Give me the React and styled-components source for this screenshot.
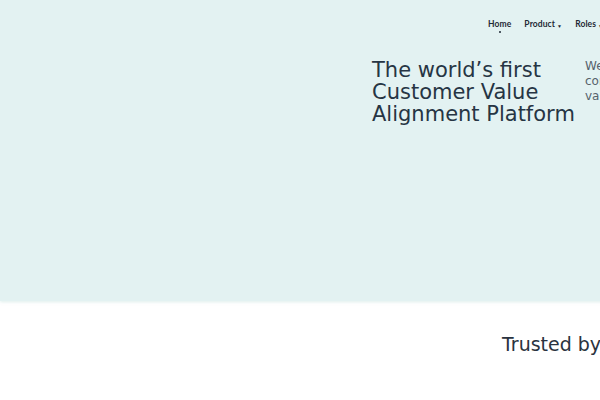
import React from 'react';
import styled, { createGlobalStyle } from 'styled-components';

const GlobalStyle = createGlobalStyle`
  html, body {
    margin: 0;
    padding: 0;
    overflow: hidden;
    background: #ffffff;
    font-family: 'DejaVu Sans', sans-serif;
  }
`;

// 전체 페이지는 화면보다 넓게 잡혀있음
const Page = styled.div`
  width: 1200px;
`;

const Hero = styled.section`
  height: 301px;
  background: #e3f2f2;
  box-shadow: 0 1px 3px rgba(160, 210, 200, 0.35);
`;

const Header = styled.header`
  display: flex;
  align-items: center;
  height: 48px;
  padding-left: 488px;
`;

const Nav = styled.nav`
  display: flex;
  gap: 13px;
`;

const NavItem = styled.a`
  position: relative;
  display: flex;
  align-items: center;
  gap: 2px;
  font-family: 'Lato', sans-serif;
  font-size: 8.5px;
  font-weight: bold;
  letter-spacing: 0.1px;
  color: #1f2a36;
  text-decoration: none;

  ${({ $active }) => $active && `
    &::after {
      content: '';
      position: absolute;
      left: 50%;
      bottom: -4px;
      width: 2px;
      height: 2px;
      margin-left: -1px;
      border-radius: 50%;
      background: #1f2a36;
    }
  `}
`;

const Caret = styled.span`
  font-size: 5px;
  margin-top: 3px;
`;

const HeroBody = styled.div`
  display: flex;
  padding-left: 372px;
  padding-top: 11px;
  gap: 10px;
`;

const Title = styled.h1`
  margin: 0;
  width: 203px;
  font-size: 21px;
  font-weight: normal;
  line-height: 22px;
  color: #263544;
`;

const Lead = styled.p`
  margin: 0;
  width: 185px;
  font-size: 12px;
  line-height: 15px;
  color: #56626c;
`;

const Trusted = styled.section`
  padding: 32px 0 0 502px;
`;

const TrustedTitle = styled.h2`
  margin: 0;
  font-size: 19px;
  font-weight: normal;
  color: #2a3340;
`;

function App() {
  return (
    <>
      <GlobalStyle />
      <Page>
        <Hero>
          <Header>
            <Nav>
              <NavItem $active>Home</NavItem>
              <NavItem>Product<Caret>▼</Caret></NavItem>
              <NavItem>Roles<Caret>▼</Caret></NavItem>
              <NavItem>Resources<Caret>▼</Caret></NavItem>
            </Nav>
          </Header>
          <HeroBody>
            <Title>The world’s first Customer Value Alignment Platform</Title>
            <Lead>
              We help revenue teams to consistently communicate value to every customer.
            </Lead>
          </HeroBody>
        </Hero>
        <Trusted>
          <TrustedTitle>Trusted by leading companies</TrustedTitle>
        </Trusted>
      </Page>
    </>
  );
}

export default App;
